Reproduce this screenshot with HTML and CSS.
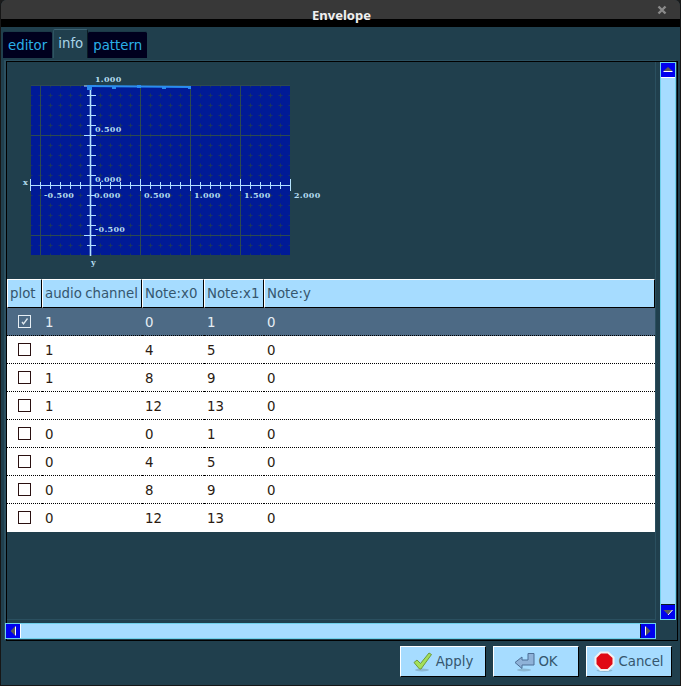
FILE: index.html
```html
<!DOCTYPE html>
<html>
<head>
    <meta charset="UTF-8">
    <link rel="stylesheet" href="styles.css">
    <title>Envelope</title>
</head>
<body>
<div class="window">
    <div class="titlebar">
        <span class="title">Envelope</span>
        <svg class="close" width="10" height="10" viewBox="0 0 10 10"><path d="M1.5 1.5L8.5 8.5M8.5 1.5L1.5 8.5" stroke="#8a8a8a" stroke-width="2.4"/></svg>
    </div>
    <div class="tabs">
        <div class="tab">editor</div>
        <div class="tab active">info</div>
        <div class="tab">pattern</div>
    </div>
    <div class="panel">
        <div class="view">
            <svg class="plot" width="320" height="217" viewBox="7 62 320 217">
                <rect x="31" y="86" width="259" height="169" fill="#001a96"/>
                <!-- minor grid -->
                <g stroke="#1a3560" stroke-width="1" stroke-dasharray="4 6" stroke-dashoffset="2.5">
                    <path d="M50.5 86V255M60.5 86V255M70.5 86V255M80.5 86V255M100.5 86V255M110.5 86V255M120.5 86V255M130.5 86V255M150.5 86V255M160.5 86V255M170.5 86V255M180.5 86V255M200.5 86V255M210.5 86V255M220.5 86V255M230.5 86V255M250.5 86V255M260.5 86V255M270.5 86V255M280.5 86V255"/>
                    <path d="M31 95.5H290M31 105.5H290M31 115.5H290M31 125.5H290M31 145.5H290M31 155.5H290M31 165.5H290M31 175.5H290M31 195.5H290M31 205.5H290M31 215.5H290M31 225.5H290M31 245.5H290"/>
                </g>
                <!-- major grid -->
                <path d="M40.5 86V255M140.5 86V255M190.5 86V255M240.5 86V255M31 85.5H290M31 135.5H290M31 235.5H290" stroke="#2d4a50" stroke-width="1"/>
                <!-- axes -->
                <g stroke="#b4e2ff" stroke-width="1" fill="none">
                    <path d="M30.5 185.5H290.5"/>
                    <path d="M90.5 86V256" stroke-width="1.6"/>
                    <path d="M40.5 182V189M50.5 182V189M60.5 182V189M70.5 182V189M80.5 182V189M100.5 182V189M110.5 182V189M120.5 182V189M130.5 182V189M150.5 182V189M160.5 182V189M170.5 182V189M180.5 182V189M200.5 182V189M210.5 182V189M220.5 182V189M230.5 182V189M250.5 182V189M260.5 182V189M270.5 182V189M280.5 182V189"/>
                    <path d="M30.5 179V191M140.5 179V191M190.5 179V191M240.5 179V191M290.5 179V191"/>
                    <path d="M87 95.5H96M87 105.5H96M87 115.5H96M87 125.5H96M87 145.5H96M87 155.5H96M87 165.5H96M87 175.5H96M87 195.5H96M87 205.5H96M87 215.5H96M87 225.5H96M87 245.5H96"/>
                    <path d="M84 86H96M84 135.5H96M84 235.5H96"/>
                </g>
                <!-- envelope -->
                <path d="M88 86L190 87" stroke="#2a8cf0" stroke-width="2" fill="none"/>
                <g fill="#2a8cf0">
                    <rect x="87" y="85" width="5" height="5"/>
                    <rect x="112" y="86" width="4" height="3"/>
                    <rect x="137" y="85" width="4" height="3"/>
                    <rect x="162" y="86" width="4" height="3"/>
                    <rect x="188" y="86" width="3" height="3"/>
                </g>
                <g class="plot-label">
                    <text x="95" y="82">1.000</text>
                    <text x="95" y="132">0.500</text>
                    <text x="95" y="182">0.000</text>
                    <text x="95" y="232">-0.500</text>
                    <text x="44" y="198">-0.500</text>
                    <text x="94" y="198">0.000</text>
                    <text x="144" y="198">0.500</text>
                    <text x="194" y="198">1.000</text>
                    <text x="244" y="198">1.500</text>
                    <text x="294" y="198">2.000</text>
                    <text x="23" y="185">x</text>
                    <text x="91" y="265">y</text>
                </g>
            </svg>
            <table class="grid">
                <colgroup>
                    <col class="c-plot"><col class="c-channel"><col class="c-x0"><col class="c-x1"><col>
                </colgroup>
                <thead>
                    <tr><th>plot</th><th>audio channel</th><th>Note:x0</th><th>Note:x1</th><th>Note:y</th></tr>
                </thead>
                <tbody>
                    <tr class="selected">
                        <td><span class="check"><svg width="11" height="11" viewBox="0 0 11 11"><path d="M3 6L4.5 8L8.5 2.5" stroke="#dfe8ee" stroke-width="1.3" fill="none"/></svg></span></td>
                        <td>1</td><td>0</td><td>1</td><td>0</td>
                    </tr>
                    <tr><td><span class="check"></span></td><td>1</td><td>4</td><td>5</td><td>0</td></tr>
                    <tr><td><span class="check"></span></td><td>1</td><td>8</td><td>9</td><td>0</td></tr>
                    <tr><td><span class="check"></span></td><td>1</td><td>12</td><td>13</td><td>0</td></tr>
                    <tr><td><span class="check"></span></td><td>0</td><td>0</td><td>1</td><td>0</td></tr>
                    <tr><td><span class="check"></span></td><td>0</td><td>4</td><td>5</td><td>0</td></tr>
                    <tr><td><span class="check"></span></td><td>0</td><td>8</td><td>9</td><td>0</td></tr>
                    <tr class="last"><td><span class="check"></span></td><td>0</td><td>12</td><td>13</td><td>0</td></tr>
                </tbody>
            </table>
        </div>
        <div class="vscroll">
            <div class="arrow"><svg width="12" height="12" viewBox="0 0 12 12"><path d="M1.5 7L6 3L10.5 7Z" fill="#5a5a5a"/><path d="M1.5 7.5H10.5" stroke="#fff"/></svg></div>
            <div class="track"></div>
            <div class="arrow"><svg width="12" height="12" viewBox="0 0 12 12"><path d="M1.5 4L6 8.5L10.5 4Z" fill="#5a5a5a"/><path d="M6 9L10.5 4" stroke="#fff"/></svg></div>
        </div>
        <div class="hscroll">
            <div class="arrow"><svg width="12" height="12" viewBox="0 0 12 12"><path d="M8 1.5L3.5 6L8 10.5Z" fill="#5a5a5a"/><path d="M8.5 1.5V10.5" stroke="#fff"/></svg></div>
            <div class="track"></div>
            <div class="arrow"><svg width="12" height="12" viewBox="0 0 12 12"><path d="M4 1.5L8.5 6L4 10.5Z" fill="#5a5a5a"/><path d="M3.5 1.5V10.5" stroke="#fff"/></svg></div>
        </div>
    </div>
    <div class="buttons">
        <div class="btn">
            <svg width="20" height="20" viewBox="0 0 20 20"><ellipse cx="9" cy="18" rx="7" ry="1.5" fill="#8cb8d4"/><path d="M1 10.5L4 8L7.5 11.5L16 1L18.5 2.5L8 17L6.5 17Z" fill="#a4e05a" stroke="#6e9a3a" stroke-width="1"/></svg>
            Apply
        </div>
        <div class="btn">
            <svg width="21" height="20" viewBox="0 0 21 20"><ellipse cx="10" cy="18" rx="7" ry="1.5" fill="#8cb8d4"/><path d="M1 10.5L8 5V8H14V1.5H20V13H8V16.5Z" fill="#8fb2d8" stroke="#4d6f96" stroke-width="1"/></svg>
            OK
        </div>
        <div class="btn">
            <svg width="21" height="21" viewBox="0 0 21 21"><ellipse cx="10.5" cy="19.5" rx="8" ry="1.5" fill="#8cb8d4"/><path d="M6.5 1.5H14L19.5 6.5V13.5L14 19H6.5L1.5 13.5V6.5Z" fill="#e00a14" stroke="#f2f2f2" stroke-width="2"/></svg>
            Cancel
        </div>
    </div>
</div>
</body>
</html>
```

FILE: styles.css
```css
html, body {
    margin: 0;
    height: 100%;
    background: #1b1b1b;
}
.window {
    box-sizing: border-box;
    width: 681px;
    height: 686px;
    display: flex;
    flex-direction: column;
    background: #203f4d;
    border-left: 1px solid #161616;
    border-right: 1px solid #161616;
    border-bottom: 1px solid #161616;
    border-radius: 6px 6px 0 0;
    overflow: hidden;
    font-family: "DejaVu Sans", sans-serif;
    font-size: 13.33px;
}
.titlebar {
    height: 19px;
    flex: none;
    display: flex;
    align-items: center;
    justify-content: center;
    position: relative;
    background: #383838;
    border-bottom: 8px solid #000;
}
.title {
    color: #f0f0f0;
    font-family: "Noto Sans", sans-serif;
    font-weight: bold;
    font-size: 13px;
    line-height: 19px;
    padding: 6px 0 0 2px;
    height: 19px;
    box-sizing: border-box;
}
.close {
    position: absolute;
    right: 13px;
    top: 5px;
}
.tabs {
    display: flex;
    align-items: flex-end;
    height: 31px;
    flex: none;
    padding-left: 2px;
}
.tab {
    box-sizing: border-box;
    height: 27px;
    line-height: 28px;
    padding: 0 5px;
    background: #00001e;
    color: #2ab0e8;
    border-top: 1px solid #1c3a48;
    border-radius: 2px 2px 0 0;
}
.tab.active {
    height: 29px;
    line-height: 28px;
    background: #203f4d;
    color: #a8d4e8;
    border-top: 1px solid #3d6272;
    border-left: 1px solid #2f5564;
    border-right: 1px solid #0a1a22;
    padding: 0 4px;
    margin: 0 0 0 1px;
}
.panel {
    flex: none;
    box-sizing: border-box;
    width: 672px;
    height: 580px;
    margin: 3px 0 0 5px;
    display: grid;
    grid-template-columns: 649px 1fr;
    grid-template-rows: 558px 1fr;
    border: 1px solid #000;
    box-shadow: -2px -1px 0 #2c5060;
}
.view {
    border-right: 1px solid #2a4f5f;
    border-bottom: 1px solid #2a4f5f;
    overflow: hidden;
}
.plot {
    display: block;
}
.plot-label text {
    font-family: "DejaVu Serif", serif;
    font-weight: bold;
    font-size: 8px;
    letter-spacing: 0.3px;
    fill: #b4dcf0;
}
.grid {
    border-collapse: separate;
    border-spacing: 0;
    table-layout: fixed;
    width: 648px;
}
.c-plot { width: 35px; }
.c-channel { width: 100px; }
.c-x0 { width: 62px; }
.c-x1 { width: 60px; }
.grid th {
    box-sizing: border-box;
    height: 29px;
    padding: 0 0 0 2px;
    text-align: left;
    font-weight: normal;
    word-spacing: -1px;
    background: #a6dcff;
    color: #35566e;
    border-top: 1px solid #fff;
    border-left: 1px solid #fff;
    border-right: 1px solid #000;
    border-bottom: 1px solid #000;
    white-space: nowrap;
}
.grid td {
    box-sizing: border-box;
    height: 28px;
    padding: 0 0 0 3px;
    background: #fff;
    color: #2a1a10;
    border-bottom: 1px dotted #000;
}
.grid td + td {
    padding-top: 2px;
}
.grid .selected td {
    background: #4d6a85;
    color: #e6eef4;
}
.grid .last td {
    border-bottom-color: transparent;
}
.check {
    display: block;
    box-sizing: border-box;
    width: 13px;
    height: 13px;
    margin-left: 8px;
    border: 1px solid #2a1010;
    background: #fff;
}
.selected .check {
    background: transparent;
    border-color: #e6eef4;
}
.check svg {
    display: block;
}
.vscroll {
    margin: 0 1px 0 4px;
    display: flex;
    flex-direction: column;
    border: 1px solid #6fd0ea;
    background: #a6dcff;
}
.vscroll .track {
    flex: 1;
    border-top: 1px solid #fff;
    border-bottom: 1px solid #0a1a22;
}
.hscroll {
    margin: 3px 0 0 -2px;
    height: 16px;
    box-sizing: border-box;
    display: flex;
    border: 1px solid #6fd0ea;
    background: #a6dcff;
}
.hscroll .track {
    flex: 1;
    border-left: 1px solid #fff;
    border-right: 1px solid #0a1a22;
}
.arrow {
    flex: none;
    height: 14px;
    min-width: 14px;
    background: #0000ee;
    display: flex;
    align-items: center;
    justify-content: center;
}
.buttons {
    flex: 1;
    display: flex;
    justify-content: flex-end;
    gap: 7px;
    padding: 5px 8px 0 0;
}
.btn {
    box-sizing: border-box;
    width: 86px;
    height: 31px;
    display: flex;
    align-items: center;
    justify-content: center;
    gap: 3px;
    background: #a6dcff;
    color: #35566e;
    border-top: 1px solid #fff;
    border-left: 1px solid #fff;
    border-right: 1px solid #000;
    border-bottom: 1px solid #000;
}
```
